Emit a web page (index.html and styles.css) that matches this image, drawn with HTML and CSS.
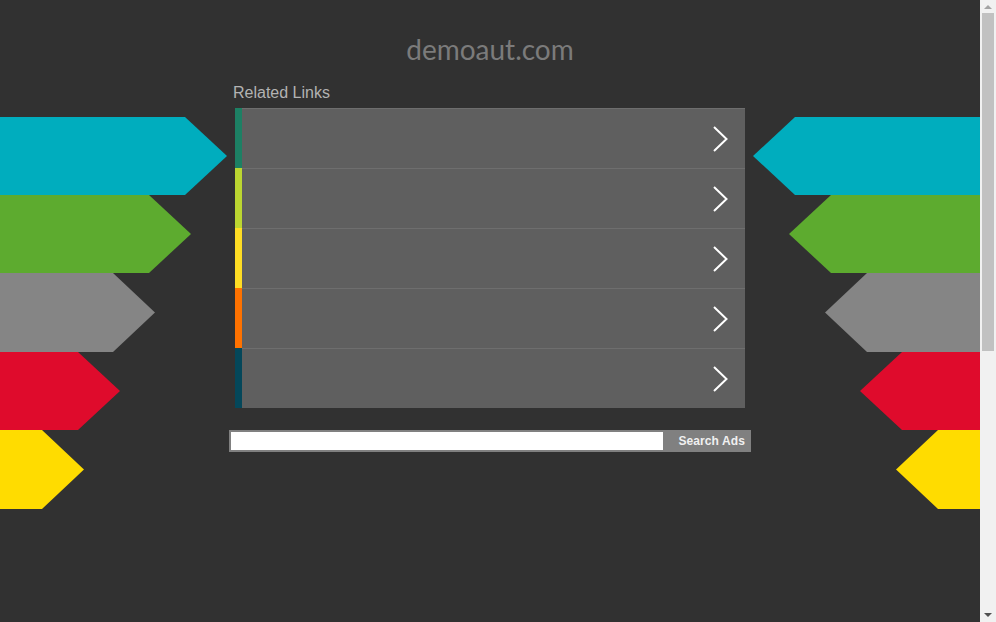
FILE: index.html
```html
<!DOCTYPE html>
<html>
<head>
<meta charset="utf-8">
<title>demoaut.com</title>
<link rel="stylesheet" href="styles.css">
</head>
<body>
<div class="page">
  <div class="arrows arrows-left">
    <div class="arrow cyan w1"></div>
    <div class="arrow green w2"></div>
    <div class="arrow gray w3 tall"></div>
    <div class="arrow red w4"></div>
    <div class="arrow yellow w5 tall"></div>
  </div>
  <main class="center">
    <h1 class="title">demoaut.com</h1>
    <div class="label">Related Links</div>
    <ul class="links">
      <li class="link"><span class="strip s1"></span><a class="row" href="#"><svg class="chev" width="16" height="28" viewBox="0 0 16 28"><polyline points="2,2 14.5,14 2,26" fill="none" stroke="#fff" stroke-width="2"/></svg></a></li>
      <li class="link"><span class="strip s2"></span><a class="row" href="#"><svg class="chev" width="16" height="28" viewBox="0 0 16 28"><polyline points="2,2 14.5,14 2,26" fill="none" stroke="#fff" stroke-width="2"/></svg></a></li>
      <li class="link"><span class="strip s3"></span><a class="row" href="#"><svg class="chev" width="16" height="28" viewBox="0 0 16 28"><polyline points="2,2 14.5,14 2,26" fill="none" stroke="#fff" stroke-width="2"/></svg></a></li>
      <li class="link"><span class="strip s4"></span><a class="row" href="#"><svg class="chev" width="16" height="28" viewBox="0 0 16 28"><polyline points="2,2 14.5,14 2,26" fill="none" stroke="#fff" stroke-width="2"/></svg></a></li>
      <li class="link"><span class="strip s5"></span><a class="row" href="#"><svg class="chev" width="16" height="28" viewBox="0 0 16 28"><polyline points="2,2 14.5,14 2,26" fill="none" stroke="#fff" stroke-width="2"/></svg></a></li>
    </ul>
    <form class="search">
      <input class="search-input" type="text">
      <button class="search-btn" type="button">Search Ads</button>
    </form>
  </main>
  <div class="arrows arrows-right">
    <div class="arrow cyan w1"></div>
    <div class="arrow green w2"></div>
    <div class="arrow gray w3 tall"></div>
    <div class="arrow red w4"></div>
    <div class="arrow yellow w5 tall"></div>
  </div>
  <div class="scrollbar">
    <svg class="sb-arrow" width="16" height="13" viewBox="0 0 16 13"><polygon points="4,9 12,9 8,5" fill="#a3a3a3"/></svg>
    <div class="sb-track"><div class="sb-thumb"></div></div>
    <svg class="sb-arrow" width="16" height="13" viewBox="0 0 16 13"><polygon points="4,4 12,4 8,8" fill="#505050"/></svg>
  </div>
</div>
</body>
</html>
```
FILE: styles.css
```css
html, body {
  margin: 0;
  padding: 0;
  background: #313131;
  overflow: hidden;
}
body {
  font-family: "Liberation Sans", Arial, sans-serif;
}
.page {
  display: grid;
  grid-template-columns: 227px 526px 1fr 16px;
  height: 622px;
}
.arrows {
  display: flex;
  flex-direction: column;
  padding-top: 117px;
}
.arrows-left { align-items: flex-start; }
.arrows-right { align-items: flex-end; }
.arrow { height: 78px; }
.arrow.tall { height: 79px; }
.arrows-left .arrow {
  clip-path: polygon(0 0, calc(100% - 42px) 0, 100% 50%, calc(100% - 42px) 100%, 0 100%);
}
.arrows-right .arrow {
  clip-path: polygon(42px 0, 100% 0, 100% 100%, 42px 100%, 0 50%);
}
.w1 { width: 227px; }
.w2 { width: 191px; }
.w3 { width: 155px; }
.w4 { width: 120px; }
.w5 { width: 84px; }
.cyan { background: #00adbe; }
.green { background: #5dab2f; }
.gray { background: #858585; }
.red { background: #df0b2c; }
.yellow { background: #ffdc00; }

.center {
  display: flex;
  flex-direction: column;
}
.title {
  margin: 33px 0 0;
  font-family: Lato, "Liberation Sans", sans-serif;
  font-weight: 400;
  font-size: 28px;
  line-height: 32px;
  color: #7b7b7b;
  text-align: center;
}
.label {
  margin: 19px 0 6px 6px;
  font-size: 16px;
  line-height: 18px;
  color: #b3b3b3;
}
.links {
  list-style: none;
  margin: 0 0 0 8px;
  padding: 0;
  width: 510px;
}
.link {
  display: flex;
  height: 60px;
}
.strip { width: 7px; flex: none; }
.s1 { background: #1d8064; }
.s2 { background: #bcd631; }
.s3 { background: #ffdd24; }
.s4 { background: #ff7200; }
.s5 { background: #04475a; }
.row {
  flex: 1;
  display: flex;
  align-items: center;
  justify-content: flex-end;
  padding-right: 17px;
  background: #5f5f5f;
  border-top: 1px solid #6e6e6e;
}
.chev { display: block; }
.search {
  display: flex;
  margin: 22px 0 0 2px;
  height: 22px;
}
.search-input {
  flex: none;
  box-sizing: border-box;
  width: 436px;
  height: 22px;
  margin: 0;
  border: 2px solid #808080;
  background: #fff;
  padding: 0 4px;
  outline: none;
}
.search-btn {
  flex: none;
  box-sizing: border-box;
  width: 86px;
  height: 22px;
  margin: 0;
  border: none;
  background: #808080;
  color: #f0f0f0;
  font-family: "Liberation Sans", Arial, sans-serif;
  font-weight: bold;
  font-size: 12px;
  letter-spacing: 0.1px;
  text-align: right;
  padding: 0 6px 0 0;
}
.scrollbar {
  display: flex;
  flex-direction: column;
  background: #f1f1f1;
}
.sb-arrow { display: block; flex: none; }
.sb-track {
  flex: 1;
  padding: 0 2px;
}
.sb-thumb {
  height: 338px;
  background: #c1c1c1;
}
```
